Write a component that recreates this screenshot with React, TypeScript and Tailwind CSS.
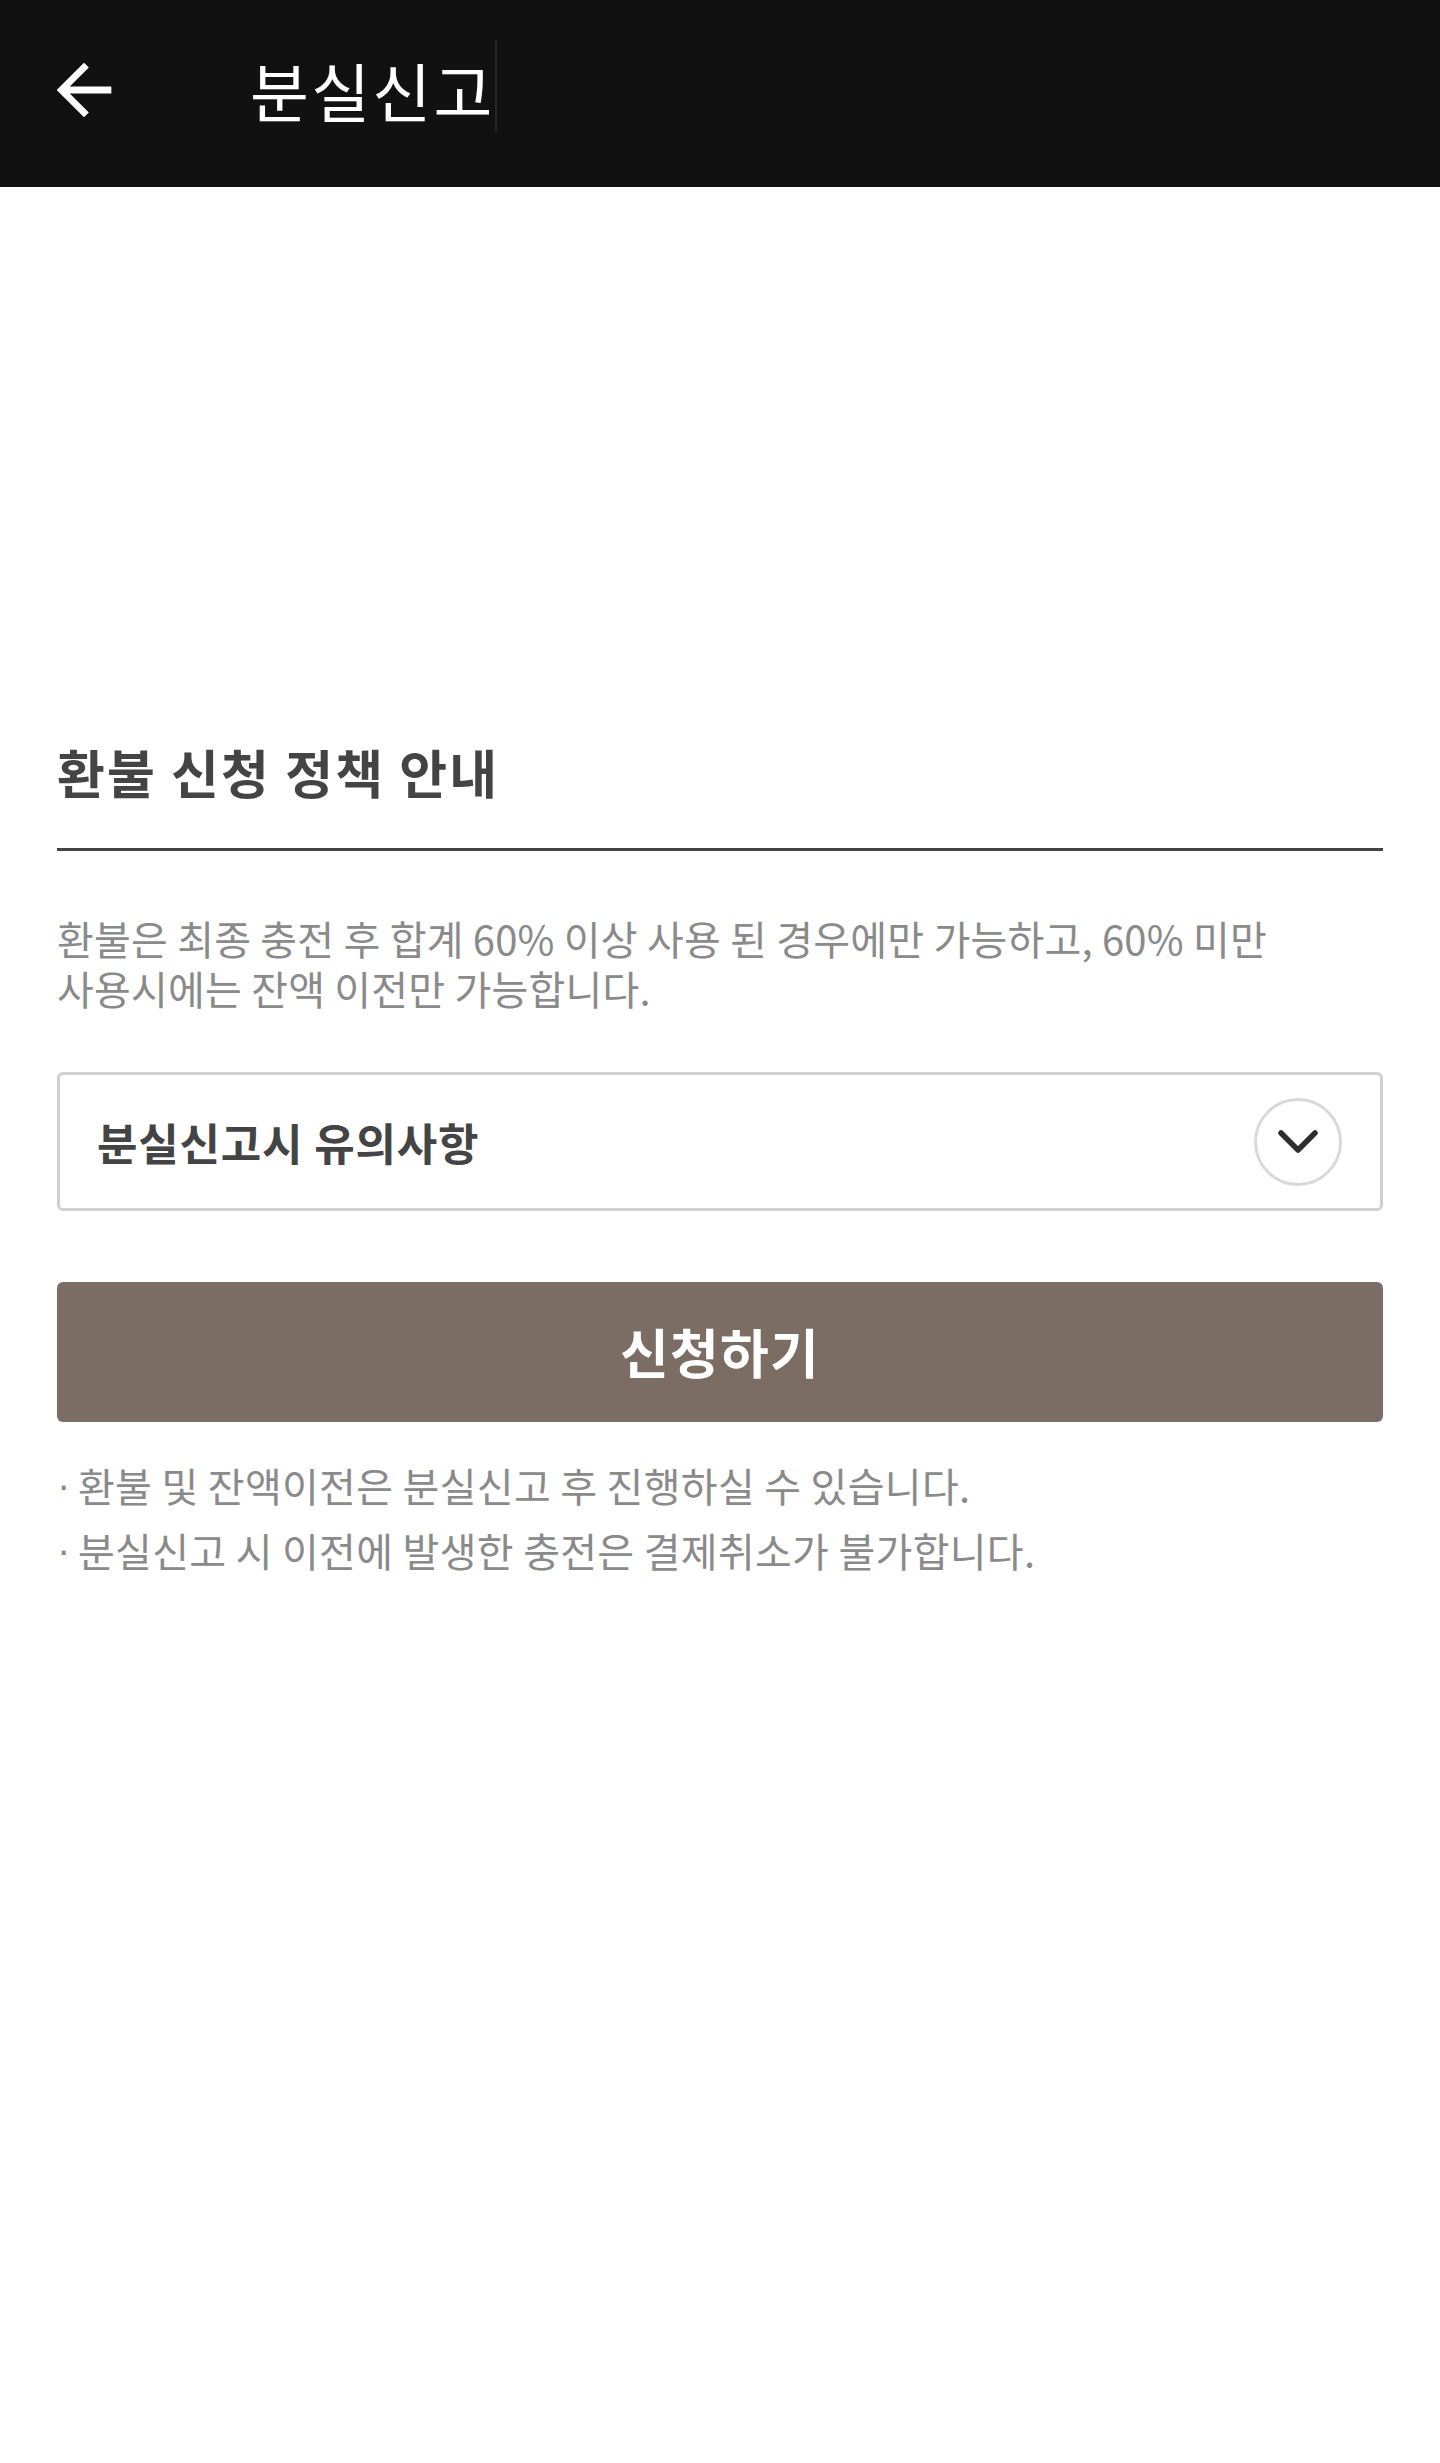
import React from "react";

const font = { fontFamily: '"Noto Sans CJK KR", "Noto Sans", sans-serif' };

function Note({ children }: { children: React.ReactNode }) {
  return (
    <li className="flex">
      <span className="w-[21px] shrink-0 font-['Liberation_Sans',sans-serif]">·</span>
      <span>{children}</span>
    </li>
  );
}

export default function App() {
  return (
    <div className="w-[1440px] min-h-[2463px] bg-white" style={font}>
      <header className="relative h-[187px] bg-[#111111] flex items-center">
        <button className="ml-[43px] mt-[-8px] w-[82px] h-[82px] flex items-center justify-center">
          <svg viewBox="0 0 24 24" width="82" height="82" fill="#ffffff">
            <path d="M20 11H7.83l5.59-5.59L12 4l-8 8 8 8 1.41-1.41L7.83 13H20v-2z" />
          </svg>
        </button>
        <h1 className="ml-[125px] mt-[-10px] text-[64px] leading-[72px] text-white font-normal tracking-[2.3px]">
          분실신고
        </h1>
        <div className="absolute left-[495px] top-[40px] w-[2px] h-[92px] bg-[#262626]" />
      </header>

      <main className="px-[57px]">
        <h2 className="mt-[554px] text-[52px] leading-[62px] font-bold text-[#444444] tracking-[2.2px]">
          환불 신청 정책 안내
        </h2>
        <div className="mt-[45px] h-[3px] bg-[#444444]" />
        <p className="mt-[62px] text-[40px] leading-[50px] text-[#8a8a8a] tracking-[0.2px]">
          환불은 최종 충전 후 합계 60% 이상 사용 된 경우에만 가능하고, 60% 미만
          <br />
          사용시에는 잔액 이전만 가능합니다.
        </p>

        <div className="mt-[59px] h-[139px] border-[3px] border-[#d0d0d0] rounded-[6px] flex items-center justify-between pl-[37px] pr-[38px]">
          <span className="text-[44px] leading-[52px] font-bold text-[#444444] tracking-[0.8px]">
            분실신고시 유의사항
          </span>
          <span className="w-[88px] h-[88px] rounded-full border-[3px] border-[#d9d9d9] flex items-center justify-center">
            <svg width="44" height="30" viewBox="0 0 44 30" fill="none">
              <path d="M5 6 L22 23 L39 6" stroke="#2e2e2e" strokeWidth="5.5" strokeLinecap="round" strokeLinejoin="round" />
            </svg>
          </span>
        </div>

        <button className="mt-[71px] w-full h-[140px] rounded-[6px] bg-[#7b6d64] text-white text-[53px] font-bold tracking-[1.2px] flex items-center justify-center">
          신청하기
        </button>

        <ul className="mt-[31px] text-[40px] leading-[65px] text-[#8a8a8a] tracking-[0.3px]">
          <Note>환불 및 잔액이전은 분실신고 후 진행하실 수 있습니다.</Note>
          <Note>분실신고 시 이전에 발생한 충전은 결제취소가 불가합니다.</Note>
        </ul>
      </main>
    </div>
  );
}
